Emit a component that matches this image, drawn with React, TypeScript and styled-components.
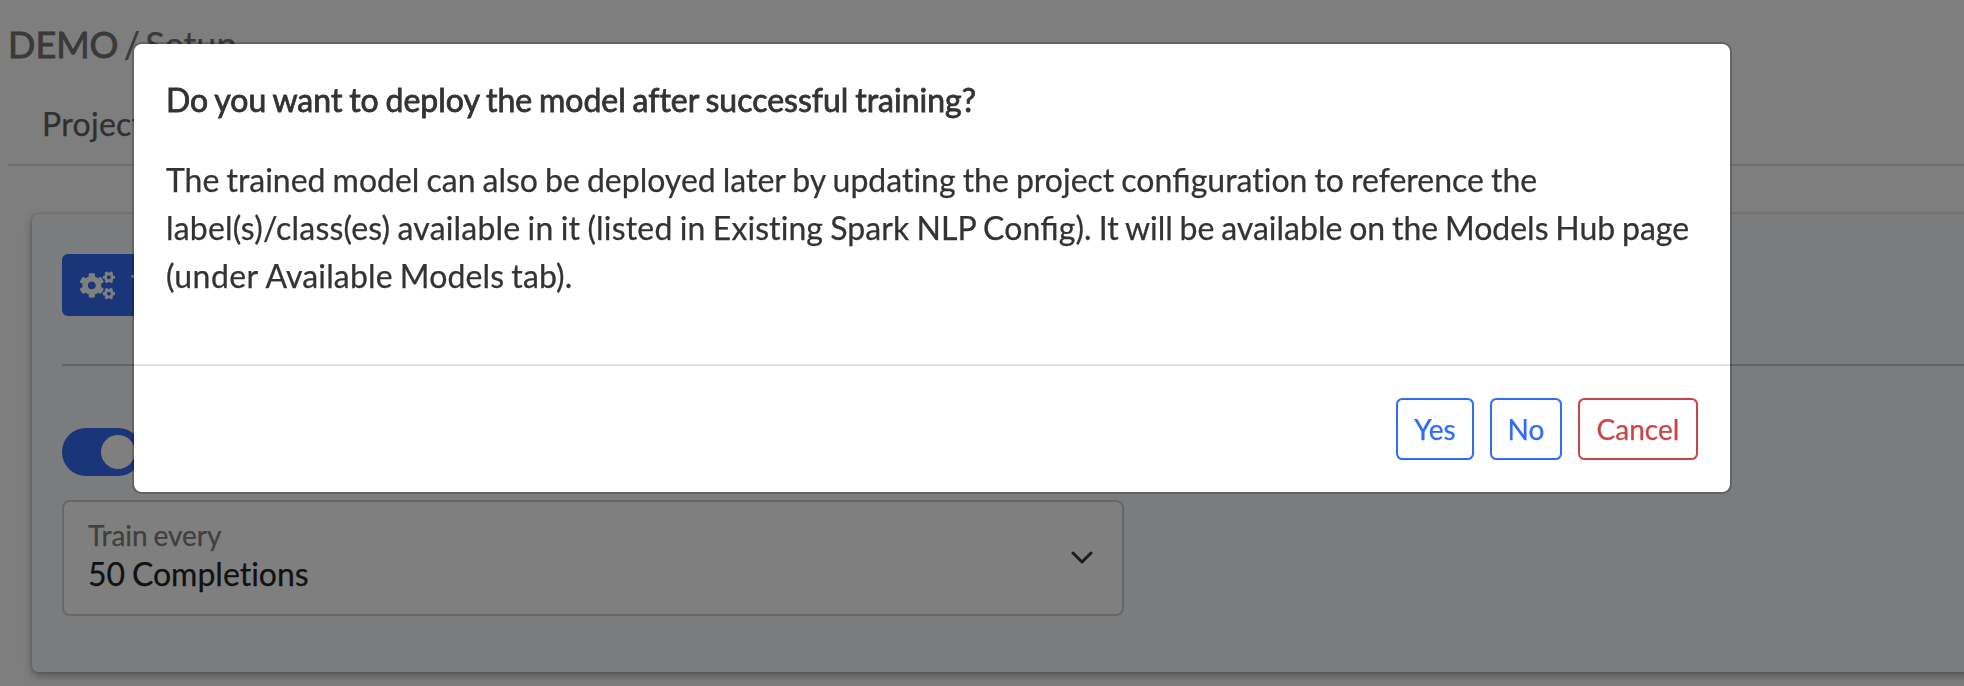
import React from "react";
import styled, { createGlobalStyle } from "styled-components";
import { FaCogs } from "react-icons/fa";

const GlobalStyle = createGlobalStyle`
  *, *::before, *::after { box-sizing: border-box; }
  body {
    margin: 0;
    background: #fcfcfc;
    color: #212529;
    font-family: Lato, "Liberation Sans", sans-serif;
    font-size: 32px;
    line-height: 48px;
    font-variant-ligatures: none;
    word-spacing: -1.4px;
    -webkit-text-stroke: 0.25px currentColor;
    overflow: hidden;
  }
`;

const Page = styled.main`
  height: 686px;
  overflow: hidden;
  padding-left: 8px;
  white-space: nowrap;
`;

const Breadcrumb = styled.h1`
  margin: 0;
  padding-top: 17px;
  height: 88px;
  font-size: 36px;
  font-weight: 400;
  line-height: 54px;
  word-spacing: -4px;
  color: #747474;
`;

const ProjectName = styled.span`
  -webkit-text-stroke: 0.9px currentColor;
`;

const Tabs = styled.nav`
  display: flex;
  height: 78px;
  padding: 12px 34px 0;
  border-bottom: 2px solid #dedede;
`;

const Tab = styled.span`
  letter-spacing: 0.3px;
  color: #606060;
`;

const Card = styled.section`
  width: 2000px;
  height: 458px;
  margin: 48px 0 0 24px;
  padding: 40px 30px 0;
  border-radius: 6px;
  background: #f6f8fb;
  box-shadow: 0 4px 8px rgba(26, 54, 36, 0.38), 0 0 3px rgba(26, 40, 36, 0.26);
`;

const TrainButton = styled.button`
  display: flex;
  align-items: center;
  gap: 16px;
  height: 62px;
  padding: 0 18px;
  border: 0;
  border-radius: 6px;
  background: #346af2;
  color: #fff;
  font: 28px Lato, sans-serif;
`;

const Divider = styled.hr`
  height: 2px;
  margin: 48px 0 62px;
  border: 0;
  background: #c9cbcd;
`;

const Toggle = styled.div`
  display: flex;
  align-items: center;
  justify-content: flex-end;
  width: 80px;
  height: 48px;
  padding: 0 7px;
  border-radius: 24px;
  background: #346af2;
`;

const Knob = styled.span`
  width: 34px;
  height: 34px;
  border-radius: 50%;
  background: #fff;
`;

const Select = styled.div`
  display: flex;
  align-items: center;
  justify-content: space-between;
  width: 1062px;
  height: 116px;
  margin-top: 24px;
  padding: 0 29px 0 24px;
  border: 2px solid #ced0d4;
  border-radius: 8px;
  background: #fff;
`;

const SelectText = styled.div`
  display: flex;
  flex-direction: column;
  padding-bottom: 5px;
`;

const SelectLabel = styled.span`
  height: 37px;
  font-size: 28px;
  line-height: 36px;
  color: #808080;
`;

const SelectValue = styled.span`
  line-height: 40px;
  color: #212529;
`;

const Backdrop = styled.div`
  position: fixed;
  inset: 0;
  padding: 42px 0 0 132px;
  background: rgba(0, 0, 0, 0.5);
`;

const Dialog = styled.div`
  width: 1600px;
  border: 2px solid rgba(0, 0, 0, 0.2);
  border-radius: 9.6px;
  background: #fff;
  background-clip: padding-box;
  color: #333;
`;

const DialogBody = styled.div`
  padding: 32px;
`;

const DialogTitle = styled.h2`
  margin: 0 0 32px;
  font-size: 32px;
  font-weight: 400;
  line-height: 48px;
  -webkit-text-stroke: 0.8px currentColor;
`;

const DialogText = styled.p`
  margin: 0 0 32px;
`;

const Run = styled.span<{ $tracking?: number; $space?: number }>`
  letter-spacing: ${({ $tracking = 0 }) => $tracking}px;
  word-spacing: ${({ $space = -1.15 }) => $space}px;
`;

const Ligature = styled.span`
  font-variant-ligatures: common-ligatures;
  letter-spacing: 0;
`;

const DialogFooter = styled.footer`
  display: flex;
  justify-content: flex-end;
  gap: 16px;
  padding: 32px;
  border-top: 2px solid #dee2e6;
`;

const OutlineButton = styled.button<{ $tone: string; $width: number }>`
  width: ${({ $width }) => $width}px;
  height: 62px;
  padding: 0;
  border: 2px solid ${({ $tone }) => $tone};
  border-radius: 6.4px;
  background: transparent;
  color: ${({ $tone }) => $tone};
  font: 28px/42px Lato, sans-serif;
`;

const BLUE = "#2f6df6";
const RED = "#cb444a";

export default function App() {
  return (
    <>
      <GlobalStyle />
      <Page>
        <Breadcrumb>
          <ProjectName>DEMO</ProjectName> / Setup
        </Breadcrumb>
        <Tabs>
          <Tab>Project</Tab>
        </Tabs>
        <Card>
          <TrainButton>
            <FaCogs size={35} />
            Train
          </TrainButton>
          <Divider />
          <Toggle>
            <Knob />
          </Toggle>
          <Select>
            <SelectText>
              <SelectLabel>Train every</SelectLabel>
              <SelectValue>50 Completions</SelectValue>
            </SelectText>
            <svg width="22" height="14" viewBox="0 0 22 14" fill="none">
              <path
                d="M2 2l9 9 9-9"
                stroke="#343a40"
                strokeWidth="3"
                strokeLinecap="round"
                strokeLinejoin="round"
              />
            </svg>
          </Select>
        </Card>
      </Page>
      <Backdrop>
        <Dialog role="dialog" aria-modal="true">
          <DialogBody>
            <DialogTitle>Do you want to deploy the model after successful training?</DialogTitle>
            <DialogText>
              <Run>
                The trained model can also be deployed later by updating the project con
                <Ligature>fi</Ligature>guration to reference the{" "}
              </Run>
              <Run $tracking={0.18}>label(s)/class(es) available in it (listed in </Run>
              <Run $tracking={0.08}>
                Existing Spark NLP Con<Ligature>fi</Ligature>g).{" "}
              </Run>
              <Run $space={-1.4}>It will be available on the Models Hub page </Run>
              <Run $tracking={0.45}>(under </Run>
              <Run $tracking={0.13}>Available Models tab).</Run>
            </DialogText>
          </DialogBody>
          <DialogFooter>
            <OutlineButton $tone={BLUE} $width={78}>Yes</OutlineButton>
            <OutlineButton $tone={BLUE} $width={72}>No</OutlineButton>
            <OutlineButton $tone={RED} $width={120}>Cancel</OutlineButton>
          </DialogFooter>
        </Dialog>
      </Backdrop>
    </>
  );
}
